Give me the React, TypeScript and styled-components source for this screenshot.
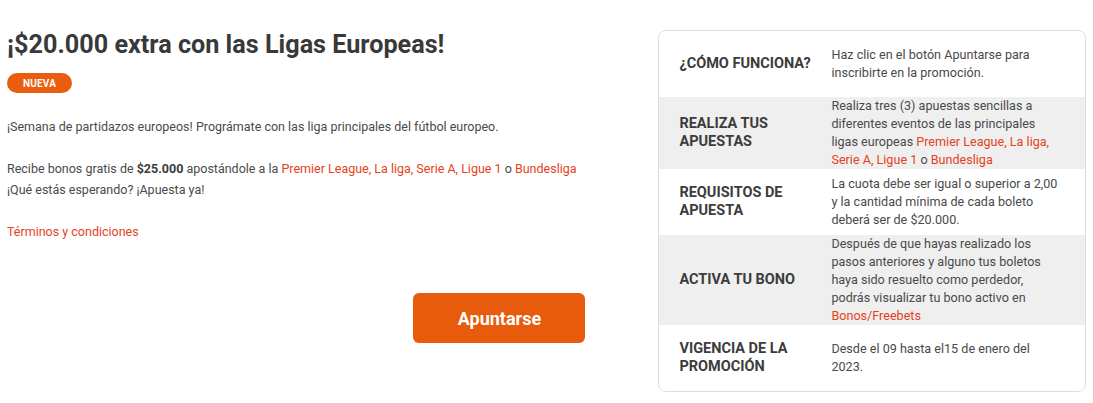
import type { FC, ReactNode } from 'react'
import styled, { createGlobalStyle } from 'styled-components'

const GlobalStyle = createGlobalStyle`
  body {
    margin: 0;
    background: #ffffff;
    font-family: Roboto, 'Liberation Sans', Arial, sans-serif;
    color: #444444;
  }
`

interface StepRow {
  label: string
  content: ReactNode
}

// built lazily so the styled Link below is defined by the time it runs
const buildSteps = (): StepRow[] => [
  {
    label: '¿Cómo funciona?',
    content: <>Haz clic en el botón Apuntarse para inscribirte en la promoción.</>
  },
  {
    label: 'Realiza tus apuestas',
    content: (
      <>
        Realiza tres (3) apuestas sencillas a diferentes eventos de las principales ligas europeas{' '}
        <Link>Premier League, La liga, Serie A, Ligue 1</Link> o <Link>Bundesliga</Link>
      </>
    )
  },
  {
    label: 'Requisitos de apuesta',
    content: <>La cuota debe ser igual o superior a 2,00 y la cantidad mínima de cada boleto deberá ser de $20.000.</>
  },
  {
    label: 'Activa tu bono',
    content: (
      <>
        Después de que hayas realizado los pasos anteriores y alguno tus boletos haya sido resuelto como perdedor,
        podrás visualizar tu bono activo en <Link>Bonos/Freebets</Link>
      </>
    )
  },
  {
    label: 'Vigencia de la promoción',
    content: <>Desde el 09 hasta el15 de enero del 2023.</>
  }
]

const App: FC = () => {
  const steps = buildSteps()

  return (
    <>
      <GlobalStyle />
      <Page>
        <Intro>
          <Title>¡$20.000 extra con las Ligas Europeas!</Title>
          <Badge>NUEVA</Badge>
          <Paragraph>¡Semana de partidazos europeos! Prográmate con las liga principales del fútbol europeo.</Paragraph>
          <Paragraph>
            Recibe bonos gratis de <strong>$25.000</strong> apostándole a la{' '}
            <Link>Premier League, La liga, Serie A, Ligue 1</Link> o <Link>Bundesliga</Link>
            <br />
            ¡Qué estás esperando? ¡Apuesta ya!
          </Paragraph>
          <Paragraph>
            <Link>Términos y condiciones</Link>
          </Paragraph>
          <JoinButton type="button">Apuntarse</JoinButton>
        </Intro>
        <InfoCard>
          {steps.map((step, i) => (
            <InfoRow key={step.label} $shaded={i % 2 === 1}>
              <InfoLabel>{step.label}</InfoLabel>
              <InfoValue>{step.content}</InfoValue>
            </InfoRow>
          ))}
        </InfoCard>
      </Page>
    </>
  )
}

const Page = styled.div`
  display: flex;
  align-items: flex-start;
  gap: 73px;
  padding: 30px 7px 0;
`

const Intro = styled.div`
  display: flex;
  flex-direction: column;
  align-items: flex-start;
  width: 579px;
`

const Title = styled.h1`
  margin: 0;
  font-size: 25.2px;
  line-height: 30px;
  font-weight: 700;
  color: #393939;
`

const Badge = styled.span`
  display: inline-flex;
  align-items: center;
  justify-content: center;
  width: 65px;
  height: 20px;
  margin-top: 13px;
  border-radius: 999px;
  background: #e85d0e;
  color: #ffffff;
  font-size: 10px;
  font-weight: 700;
  letter-spacing: 0.2px;
`

const Paragraph = styled.p`
  margin: 23px 0 0;
  font-size: 12.5px;
  line-height: 21px;
  color: #4a4a4a;

  & + & {
    margin-top: 21px;
  }

  strong {
    font-weight: 700;
    color: #3c3c3c;
  }
`

const Link = styled.span`
  color: #e5421c;
`

const JoinButton = styled.button`
  align-self: flex-end;
  width: 172px;
  height: 50px;
  margin-top: 51px;
  border: none;
  border-radius: 6px;
  background: #e85b0c;
  color: #ffffff;
  font-family: inherit;
  font-size: 18px;
  font-weight: 700;
  cursor: pointer;
`

const InfoCard = styled.div`
  width: 426px;
  border: 1px solid #dcdcdc;
  border-radius: 8px;
  overflow: hidden;
`

const InfoRow = styled.div<{ $shaded: boolean }>`
  display: grid;
  grid-template-columns: 152px 228px;
  align-items: center;
  min-height: 66px;
  padding: 0 20px;
  background: ${(props) => (props.$shaded ? '#efefef' : '#ffffff')};
`

const InfoLabel = styled.div`
  font-size: 14.5px;
  line-height: 18px;
  font-weight: 700;
  text-transform: uppercase;
  color: #3c3c3c;
  padding-right: 10px;
`

const InfoValue = styled.div`
  font-size: 12.6px;
  line-height: 18px;
  color: #4a4a4a;
`

export default App
